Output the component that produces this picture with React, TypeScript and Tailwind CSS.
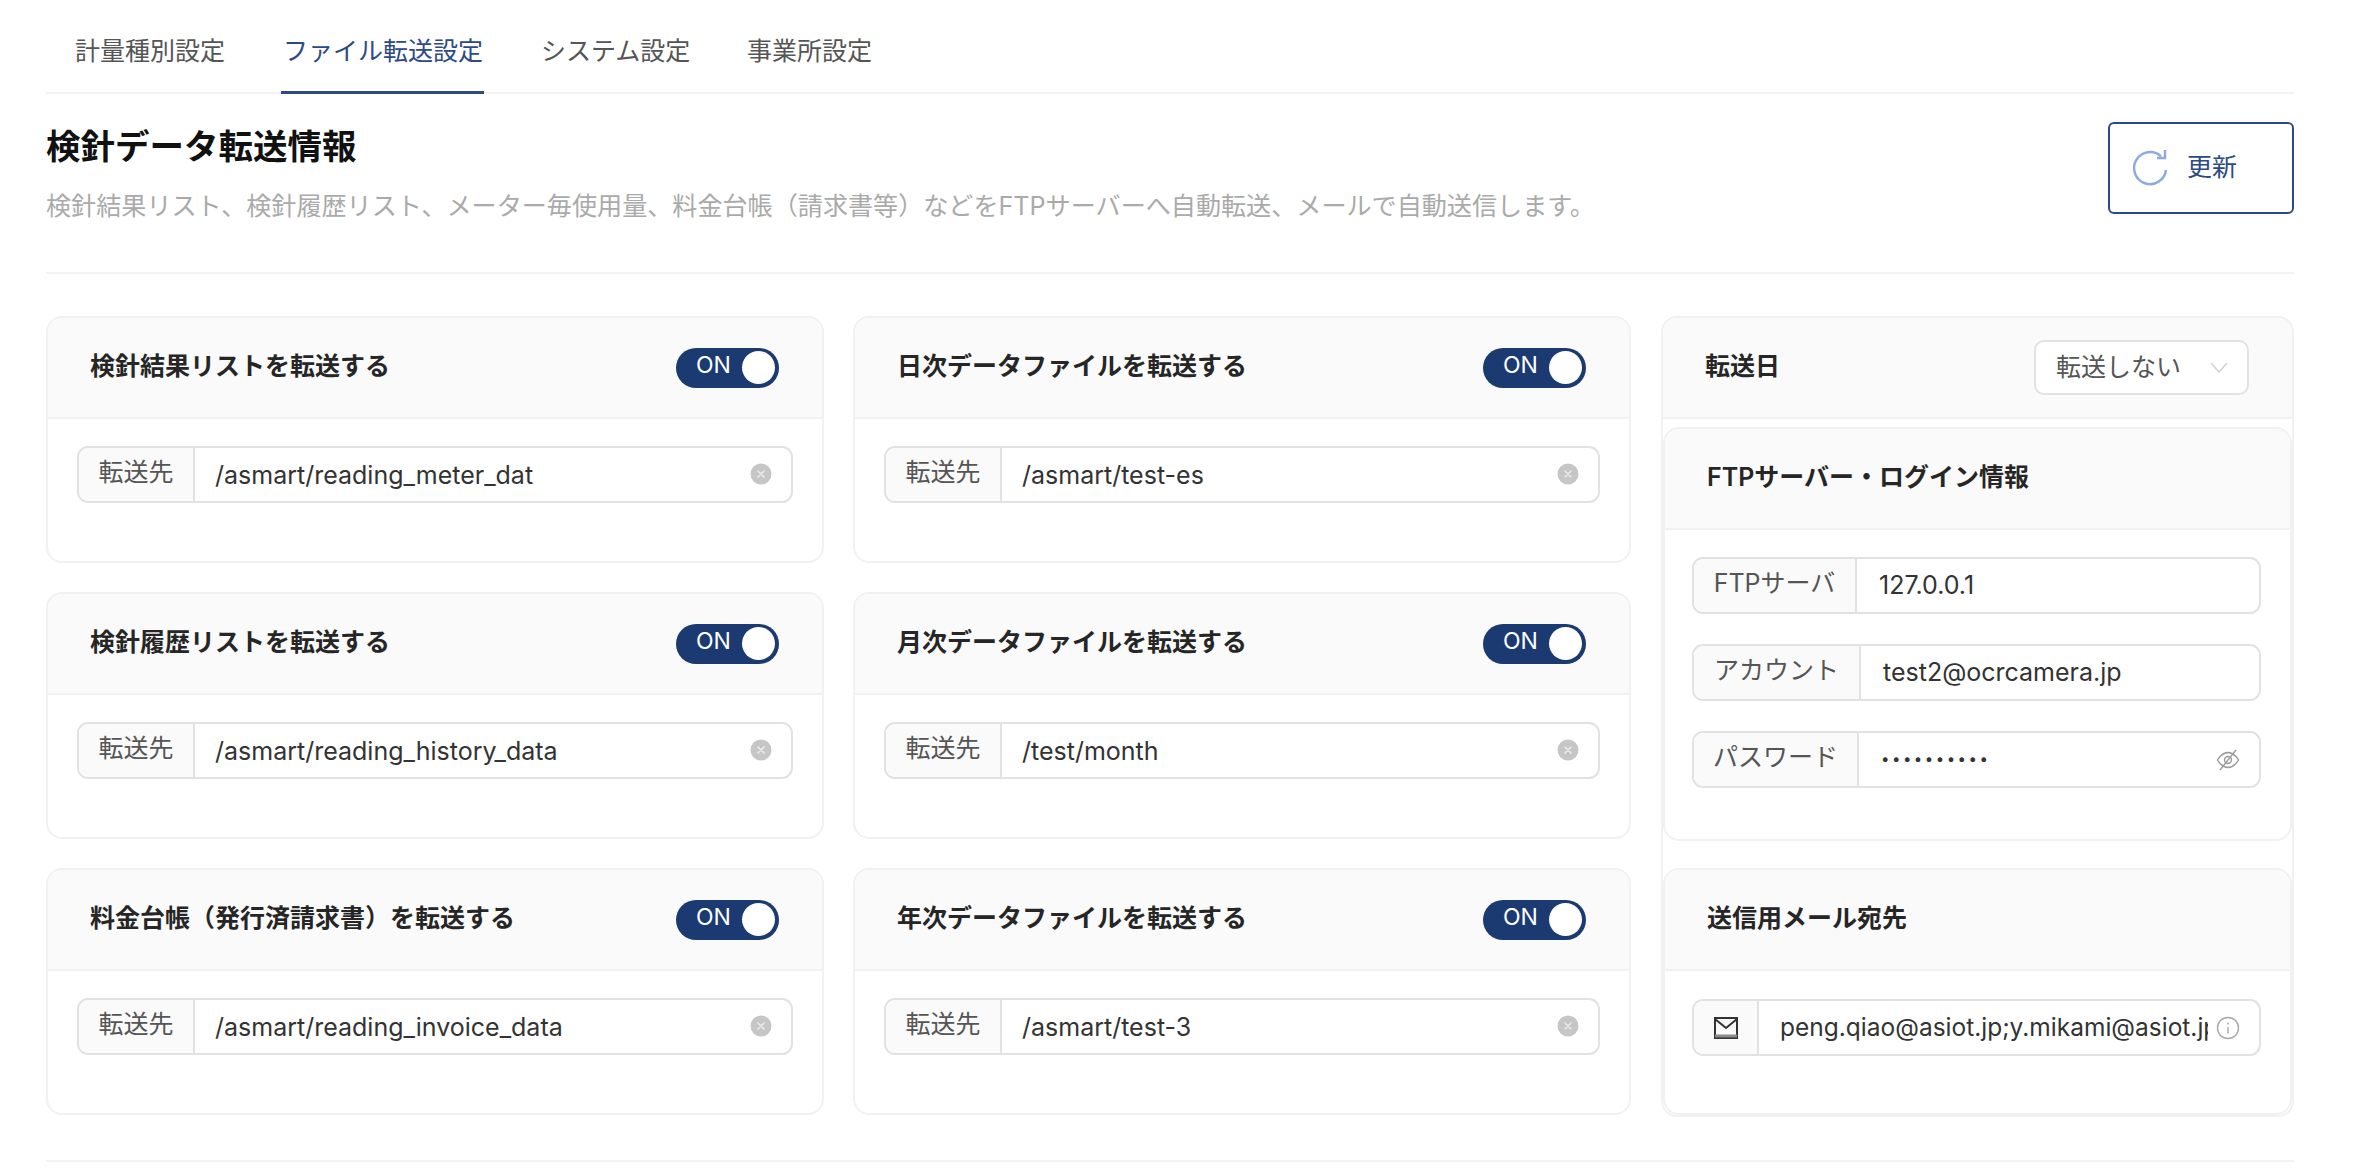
import { CSSProperties, ReactNode } from 'react';

const font: CSSProperties = { fontFamily: 'Inter, "Noto Sans CJK JP", sans-serif' };

function ClearIcon() {
  return (
    <svg viewBox="0 0 22 22" className="w-[22px] h-[22px] shrink-0 -mt-px">
      <circle cx="11" cy="11" r="10.5" fill="#c6c6c6" />
      <path d="M8 8l6 6M14 8l-6 6" stroke="#ececec" strokeWidth="1.6" strokeLinecap="round" />
    </svg>
  );
}

function Toggle() {
  return (
    <div className="flex items-center justify-between w-[103px] h-10 rounded-full bg-[#1b3a72] pl-5 pr-1">
      <span className="text-[23px] leading-none text-white pb-1">ON</span>
      <span className="w-[33px] h-[33px] rounded-full bg-white" />
    </div>
  );
}

function Field({ label, children, labelWidth, valuePad = 'pl-5' }: { label: ReactNode; children: ReactNode; labelWidth: string; valuePad?: string }) {
  return (
    <div className="flex h-[57px] border-2 border-[#e2e2e2] rounded-[11px] overflow-hidden bg-white">
      <div className={`${labelWidth} shrink-0 flex items-center justify-center bg-[#fafafa] border-r-2 border-[#e2e2e2] text-[25px] leading-none text-[#555] pb-1`}>
        {label}
      </div>
      <div className={`${valuePad} flex-1 min-w-0 flex items-center pr-[19px] text-[25px] text-[#333]`}>{children}</div>
    </div>
  );
}

function CardHead({ title, right }: { title: string; right?: ReactNode }) {
  return (
    <div className="h-[101px] flex items-center justify-between bg-[#fafafa] border-b-2 border-[#f1f1f1] pl-[42px] pr-[43px]">
      <div className="text-[25px] font-semibold text-[#262626] pb-0.5">{title}</div>
      {right}
    </div>
  );
}

function TransferCard({ title, path }: { title: string; path: string }) {
  return (
    <div className="h-[247px] border-2 border-[#f1f1f1] rounded-[16px] overflow-hidden bg-white">
      <CardHead title={title} right={<Toggle />} />
      <div className="pt-[27px] px-[29px]">
        <Field label="転送先" labelWidth="w-[116px]">
          <span className="flex-1 min-w-0 truncate pt-[2px]">{path}</span>
          <ClearIcon />
        </Field>
      </div>
    </div>
  );
}

const left = [
  { title: '検針結果リストを転送する', path: '/asmart/reading_meter_dat' },
  { title: '検針履歴リストを転送する', path: '/asmart/reading_history_data' },
  { title: '料金台帳（発行済請求書）を転送する', path: '/asmart/reading_invoice_data' },
];
const middle = [
  { title: '日次データファイルを転送する', path: '/asmart/test-es' },
  { title: '月次データファイルを転送する', path: '/test/month' },
  { title: '年次データファイルを転送する', path: '/asmart/test-3' },
];

export default function App() {
  return (
    <div className="w-[2374px] h-[1172px] bg-white overflow-hidden pl-[46px] pr-[80px] flex flex-col" style={font}>
      <div className="h-[94px] flex items-start border-b-2 border-[#f3f3f3] text-[25px] text-[#555]">
        <div className="h-[94px] flex pl-[25px] gap-[52px]">
          <div className="pt-[32px] px-1 leading-[38px] whitespace-nowrap">計量種別設定</div>
          <div className="pt-[32px] pl-[2px] w-[203px] mr-px leading-[38px] whitespace-nowrap text-[#2c4a85] border-b-[3px] border-[#2c4a85] h-[94px]">ファイル転送設定</div>
          <div className="pt-[32px] px-1 w-[154px] leading-[38px] whitespace-nowrap">システム設定</div>
          <div className="pt-[32px] px-1 leading-[38px] whitespace-nowrap">事業所設定</div>
        </div>
      </div>

      <div className="h-[180px] flex justify-between border-b-2 border-[#f3f3f3]">
        <div>
          <div className="mt-[30px] text-[34.5px] leading-[46px] font-bold text-[#111]">検針データ転送情報</div>
          <div className="mt-[18px] text-[25.1px] leading-9 text-[#aaaaaa]">
            検針結果リスト、検針履歴リスト、メーター毎使用量、料金台帳（請求書等）などをFTPサーバーへ自動転送、メールで自動送信します。
          </div>
        </div>
        <button className="mt-[28px] w-[186px] h-[92px] flex items-center pl-5 gap-[7px] border-2 border-[#2c4a85] rounded-[6px] text-[25px] text-[#2c4a85] bg-white">
          <svg viewBox="0 0 50 50" className="w-[50px] h-[50px]" fill="none" stroke="#8dabdf" strokeWidth="2.5">
            <path d="M31 13.4A16 16 0 1 0 36 27" />
            <path d="M27 15h8V7" />
          </svg>
          更新
        </button>
      </div>

      <div className="mt-[42px] flex gap-[29px]">
        <div className="w-[778px] flex flex-col gap-[29px]">
          {left.map((c) => (
            <TransferCard key={c.title} {...c} />
          ))}
        </div>
        <div className="w-[778px] flex flex-col gap-[29px]">
          {middle.map((c) => (
            <TransferCard key={c.title} {...c} />
          ))}
        </div>
        <div className="ml-px w-[633px] h-[801px] border-2 border-[#f1f1f1] rounded-[16px] overflow-hidden bg-white">
          <CardHead
            title="転送日"
            right={
              <div className="w-[215px] h-[55px] flex items-center justify-between pl-5 pr-[18px] border-2 border-[#e2e2e2] rounded-[10px] bg-white text-[25px] text-[#555]">
                転送しない
                <svg viewBox="0 0 20 12" className="w-5 h-3" fill="none" stroke="#d4d4d4" strokeWidth="1.6">
                  <path d="M2 1l8 9 8-9" />
                </svg>
              </div>
            }
          />
          <div className="mt-2 flex flex-col gap-[27px]">
            <div className="h-[414px] border-2 border-[#f1f1f1] rounded-[16px] overflow-hidden">
              <CardHead title="FTPサーバー・ログイン情報" />
              <div className="pt-[27px] pl-[27px] pr-[29px] flex flex-col gap-[30px]">
                <Field label="FTPサーバ" labelWidth="w-[163px]" valuePad="pl-[22px]">
                  127.0.0.1
                </Field>
                <Field label="アカウント" labelWidth="w-[167px]" valuePad="pl-[22px]">
                  test2@ocrcamera.jp
                </Field>
                <Field label="パスワード" labelWidth="w-[165px]" valuePad="pl-[22px]">
                  <span className="flex-1 tracking-[2.5px] text-[#333] text-[15px]">••••••••••</span>
                  <svg viewBox="0 0 24 24" className="w-6 h-6 shrink-0" fill="none" stroke="#9a9a9a" strokeWidth="1.4">
                    <path d="M1.5 12s4-7.5 10.5-7.5S22.500 12 22.500 12s-4 7.500-10.500 7.500S1.500 12 1.500 12Z" />
                    <circle cx="12" cy="12" r="3.5" />
                    <path d="M4 22L20 2" />
                  </svg>
                </Field>
              </div>
            </div>
            <div className="h-[247px] border-2 border-[#f1f1f1] rounded-[16px] overflow-hidden">
              <CardHead title="送信用メール宛先" />
              <div className="pt-[28px] pl-[27px] pr-[29px]">
                <Field
                  labelWidth="w-[65px]"
                  valuePad="pl-[21px]"
                  label={
                    <svg viewBox="0 0 24 22" className="w-6 h-[22px] mt-1" fill="none" stroke="#333" strokeWidth="2">
                      <path d="M1 1h22v20H1Z" />
                      <path d="M1 2l11 9 11-9" />
                      <path d="M1 19h22" stroke="#8a8a8a" strokeWidth="3" />
                    </svg>
                  }
                >
                  <span className="flex-1 min-w-0 overflow-hidden whitespace-nowrap text-[24.5px]">peng.qiao@asiot.jp;y.mikami@asiot.jp</span>
                  <svg viewBox="0 0 24 24" className="w-6 h-6 ml-2 shrink-0" fill="none" stroke="#a8a8a8" strokeWidth="1.4">
                    <circle cx="12" cy="12" r="10.5" />
                    <path d="M12 11v6.500M12 6.500v2" />
                  </svg>
                </Field>
              </div>
            </div>
          </div>
        </div>
      </div>

      <div className="mt-[43px] border-t-2 border-[#f3f3f3]" />
    </div>
  );
}
